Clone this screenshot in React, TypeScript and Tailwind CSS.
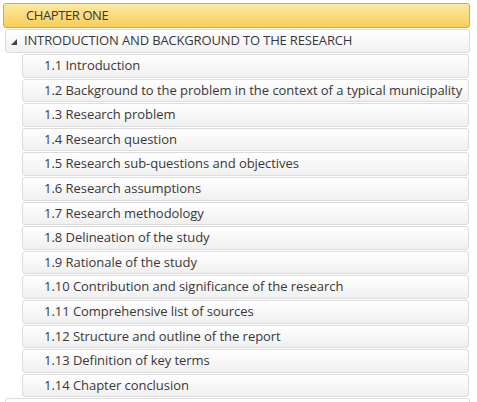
import React from "react";

const items = [
  "1.1 Introduction",
  "1.2 Background to the problem in the context of a typical municipality",
  "1.3 Research problem",
  "1.4 Research question",
  "1.5 Research sub-questions and objectives",
  "1.6 Research assumptions",
  "1.7 Research methodology",
  "1.8 Delineation of the study",
  "1.9 Rationale of the study",
  "1.10 Contribution and significance of the research",
  "1.11 Comprehensive list of sources",
  "1.12 Structure and outline of the report",
  "1.13 Definition of key terms",
  "1.14 Chapter conclusion",
];

export default function App() {
  return (
    <div
      className="w-[477px] h-[402px] bg-white overflow-hidden pt-[3px] text-[13px] text-[#383838]"
      style={{ fontFamily: '"Open Sans", "Noto Sans", sans-serif' }}
    >
      <div className="ml-[3px] w-[467px] h-[25px] rounded-[3px] border border-[#d6a94c] bg-gradient-to-b from-[#fde9a2] to-[#f9cd55] flex items-center pl-[22px] tracking-[-0.4px]">
        CHAPTER ONE
      </div>
      <div className="ml-[5px] w-[465px] h-[24px] mt-[1px] rounded-[3px] border border-[#dcdcdc] bg-gradient-to-b from-white to-[#f1f1f1] flex items-center pl-[4px] tracking-[-0.15px]">
        <svg width="8" height="8" viewBox="0 0 8 8" className="mr-[6px] mt-[1px]">
          <polygon points="7,1 7,7 1,7" fill="#444" />
        </svg>
        INTRODUCTION AND BACKGROUND TO THE RESEARCH
      </div>
      <div className="flex flex-col gap-[1px] mt-[1px] ml-[22px]">
        {items.map((t) => (
          <div
            key={t}
            className="w-[447px] h-[23.6px] rounded-[3px] border border-[#dcdcdc] bg-gradient-to-b from-white to-[#f0f0f0] flex items-center pl-[21px] whitespace-nowrap tracking-[-0.04px]"
          >
            {t}
          </div>
        ))}
      </div>
      <div className="ml-[5px] w-[465px] h-[24px] mt-[1px] rounded-[3px] border border-[#dcdcdc] bg-gradient-to-b from-white to-[#f1f1f1]" />
    </div>
  );
}
